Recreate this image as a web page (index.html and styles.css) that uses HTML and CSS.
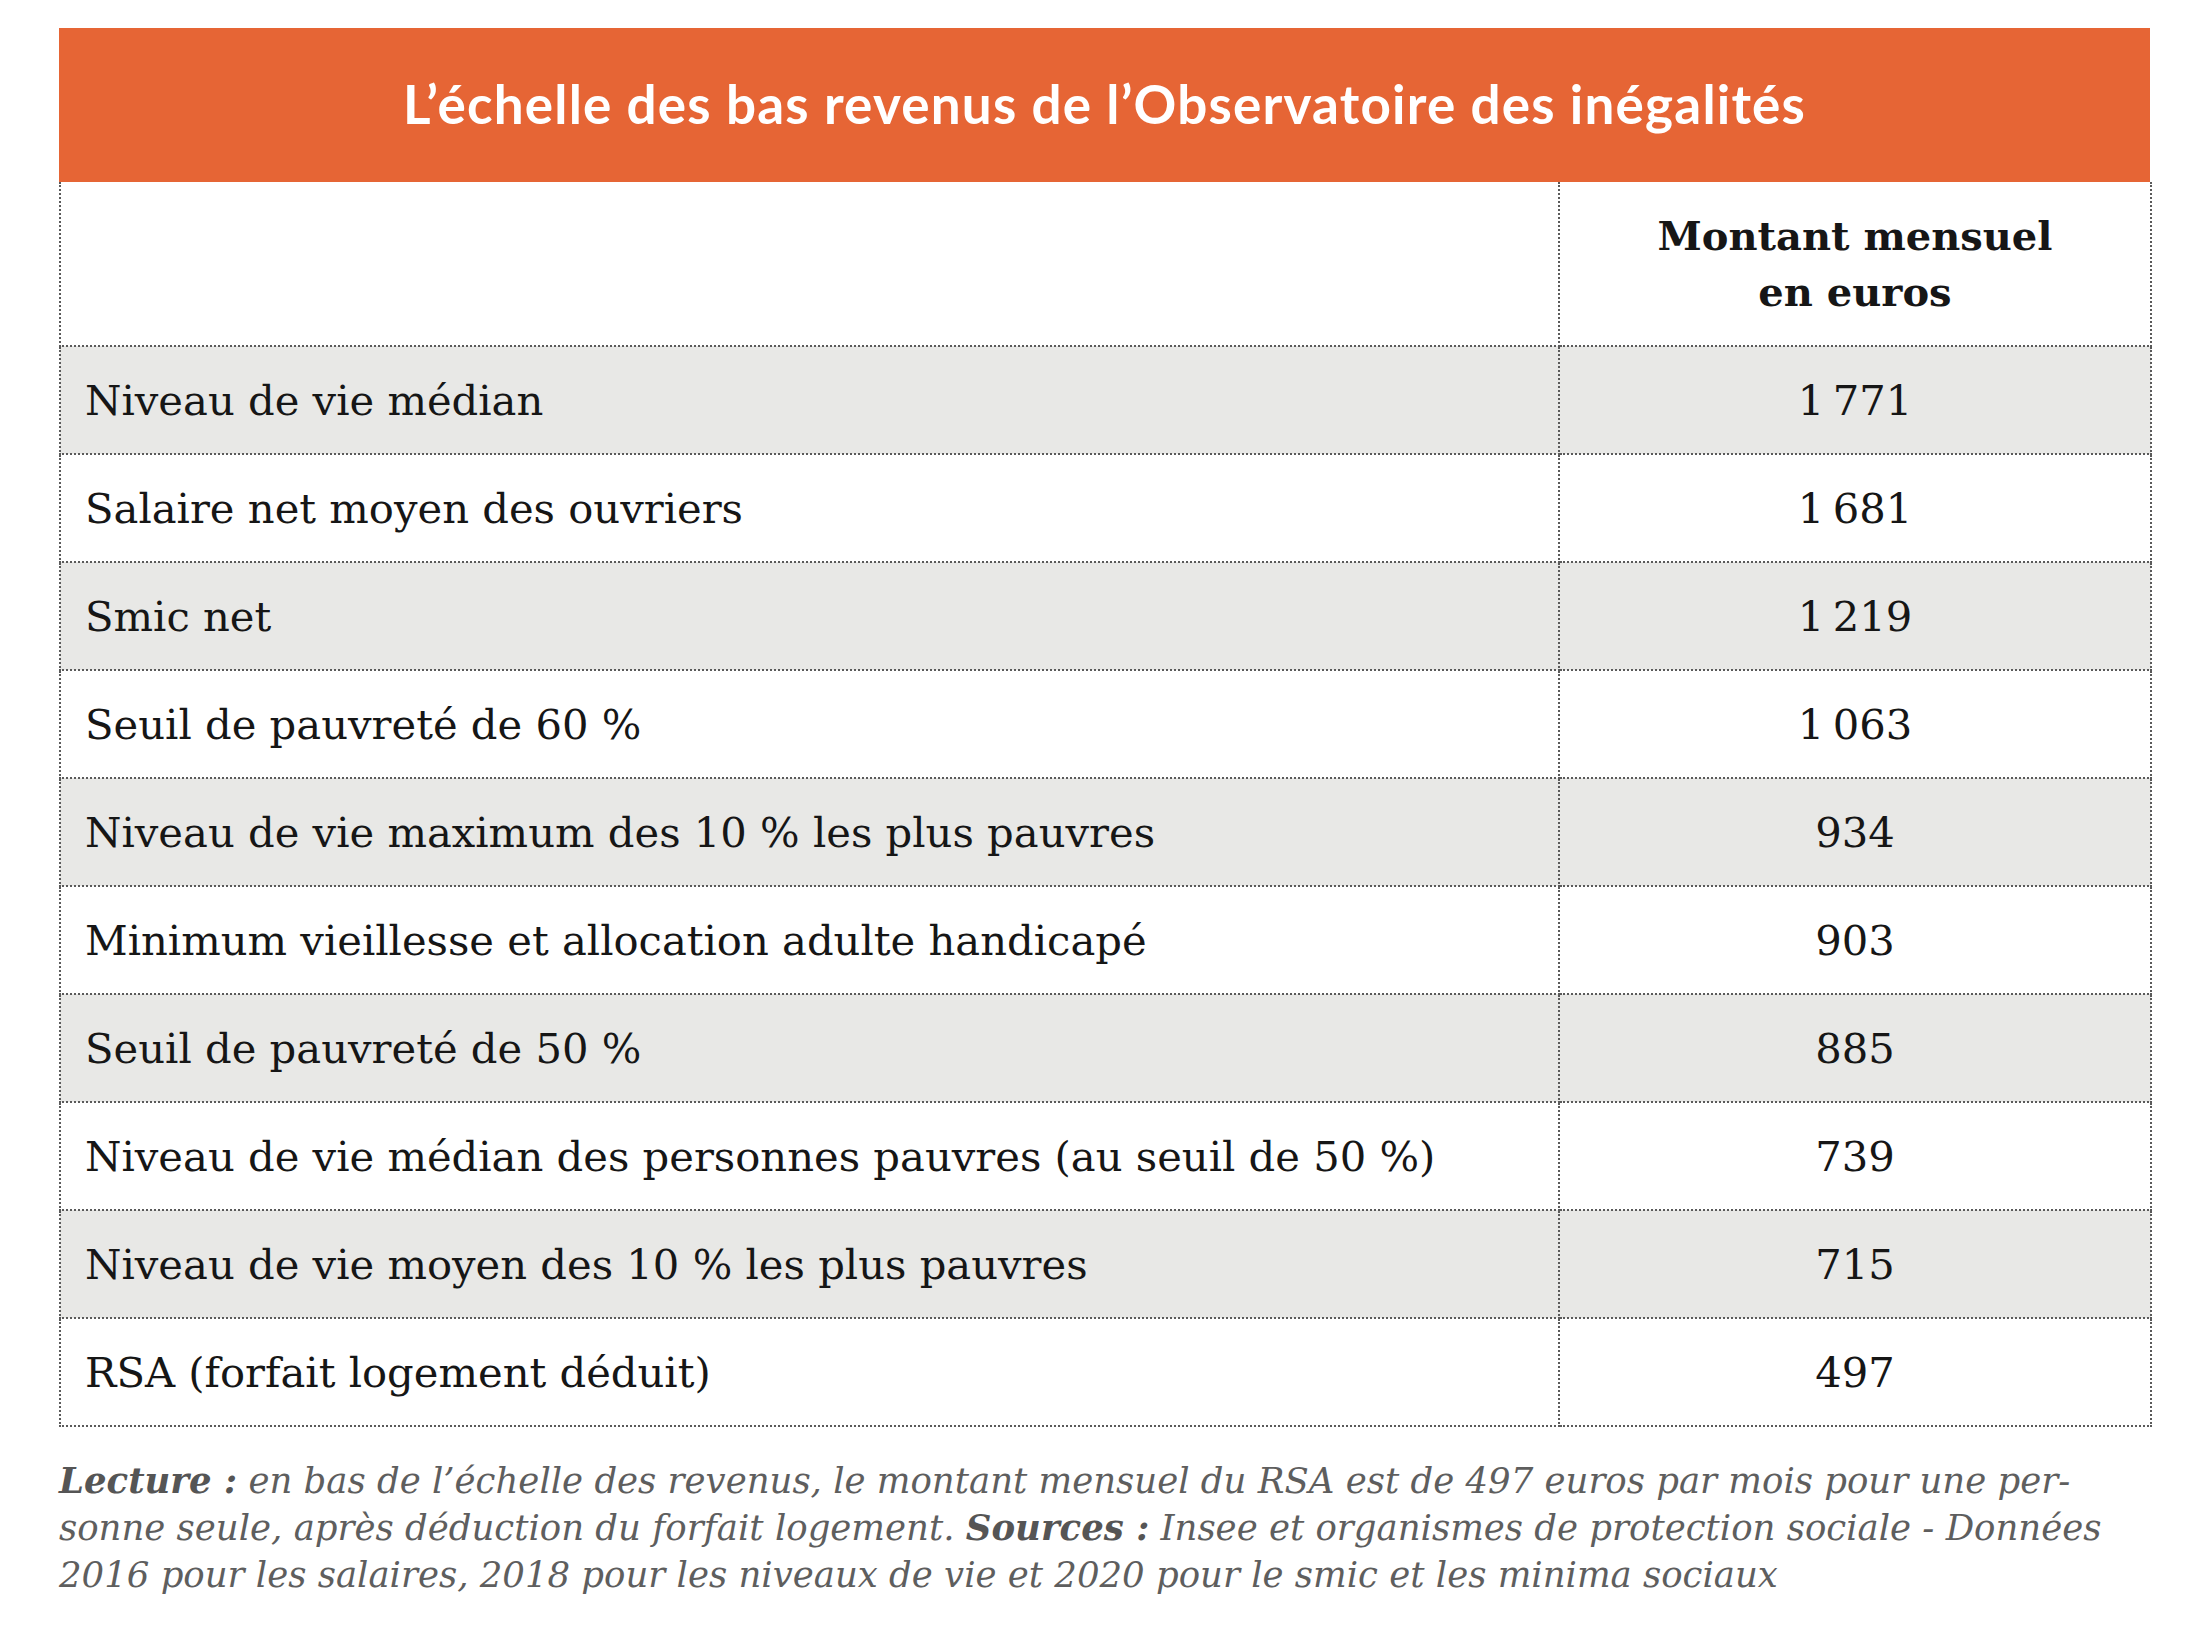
FILE: index.html
```html
<!DOCTYPE html>
<html lang="fr">
<head>
<meta charset="utf-8">
<title>L’échelle des bas revenus</title>
<link rel="stylesheet" href="styles.css">
</head>
<body>
<div class="figure">
  <div class="banner"><h1 class="banner-title">L’échelle des bas revenus de l’Observatoire des inégalités</h1></div>
  <table class="scale">
    <colgroup><col class="col-label"><col class="col-amount"></colgroup>
    <thead>
      <tr><th class="head-label"></th><th class="head-amount">Montant mensuel<br>en euros</th></tr>
    </thead>
    <tbody>
      <tr class="shade"><td class="label">Niveau de vie médian</td><td class="amount">1&#8239;771</td></tr>
      <tr><td class="label">Salaire net moyen des ouvriers</td><td class="amount">1&#8239;681</td></tr>
      <tr class="shade"><td class="label">Smic net</td><td class="amount">1&#8239;219</td></tr>
      <tr><td class="label">Seuil de pauvreté de 60&nbsp;%</td><td class="amount">1&#8239;063</td></tr>
      <tr class="shade"><td class="label">Niveau de vie maximum des 10&nbsp;% les plus pauvres</td><td class="amount">934</td></tr>
      <tr><td class="label">Minimum vieillesse et allocation adulte handicapé</td><td class="amount">903</td></tr>
      <tr class="shade"><td class="label">Seuil de pauvreté de 50&nbsp;%</td><td class="amount">885</td></tr>
      <tr><td class="label">Niveau de vie médian des personnes pauvres (au seuil de 50&nbsp;%)</td><td class="amount">739</td></tr>
      <tr class="shade"><td class="label">Niveau de vie moyen des 10&nbsp;% les plus pauvres</td><td class="amount">715</td></tr>
      <tr><td class="label">RSA (forfait logement déduit)</td><td class="amount">497</td></tr>
    </tbody>
  </table>
  <p class="note"><strong>Lecture&nbsp;:</strong> en bas de l’échelle des revenus, le montant mensuel du RSA est de 497 euros par mois pour une per-<br>sonne seule, après déduction du forfait logement. <strong>Sources&nbsp;:</strong> Insee et organismes de protection sociale - Données<br>2016 pour les salaires, 2018 pour les niveaux de vie et 2020 pour le smic et les minima sociaux</p>
</div>
</body>
</html>
```
FILE: styles.css
```css
html, body {
  margin: 0;
  padding: 0;
  background: #ffffff;
}

.figure {
  width: 2091px;
  margin: 28px 0 0 59px;
}

.banner {
  height: 154px;
  background: #e66535;
  display: flex;
  align-items: center;
  justify-content: center;
}

.banner-title {
  margin: 0;
  padding-bottom: 4px;
  font-family: "Lato", "Open Sans", sans-serif;
  font-weight: 700;
  font-size: 53px;
  color: #ffffff;
  letter-spacing: 1.2px;
}

.scale {
  width: 100%;
  border-collapse: collapse;
  table-layout: fixed;
  font-family: "DejaVu Serif", "Liberation Serif", serif;
  color: #161616;
}

.col-label { width: 1499px; }
.col-amount { width: 592px; }

.scale th,
.scale td {
  border: 2px dotted #5a5a5a;
  padding: 0;
}

.scale thead th {
  border-top: none;
  height: 163px;
}

.scale .head-amount {
  font-weight: 700;
  font-size: 40px;
  line-height: 56px;
  text-align: center;
  vertical-align: middle;
}

.scale tbody td {
  height: 106px;
  font-size: 41.7px;
  vertical-align: middle;
}

.scale tbody tr.shade td {
  background: #e8e8e6;
}

.scale td.label {
  padding-left: 24px;
}

.scale td.amount {
  text-align: center;
}

.note {
  margin: 30px 0 0 0;
  font-family: "DejaVu Serif", "Liberation Serif", serif;
  font-style: italic;
  font-size: 35.5px;
  line-height: 47px;
  color: #5e5e5e;
  white-space: nowrap;
}

.note strong {
  font-weight: 700;
  color: #555555;
}
```
